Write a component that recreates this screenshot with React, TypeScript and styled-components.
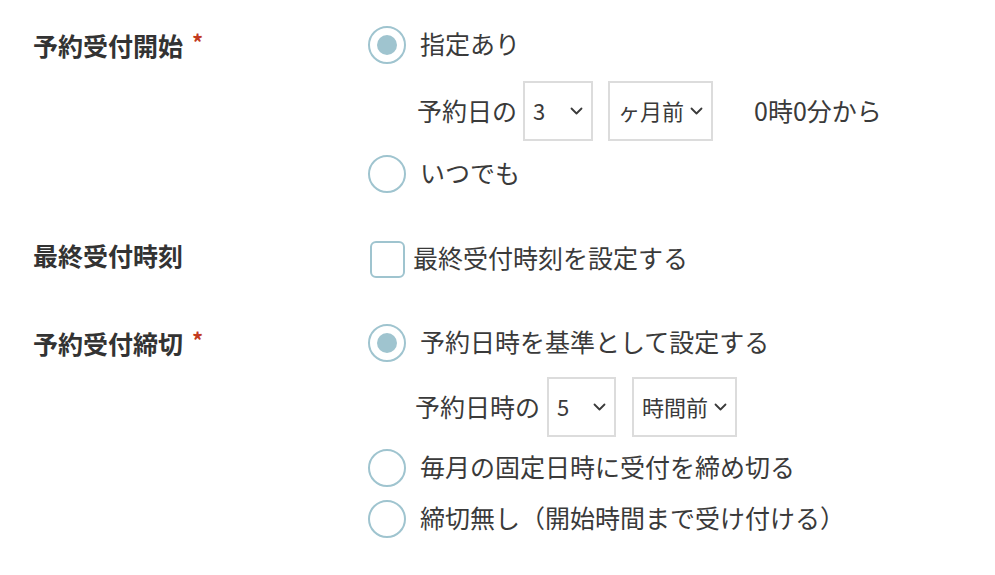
import styled, { createGlobalStyle } from 'styled-components'

const GlobalStyle = createGlobalStyle`
	body {
		margin: 0;
		background: #ffffff;
		font-family: 'Noto Sans CJK JP', 'Noto Sans', sans-serif;
		color: #3a3a3a;
	}
`

const ACCENT = '#9fc4cf'

const Chevron = () => (
	<S.ChevronIcon width='13' height='8' viewBox='0 0 13 8' fill='none'>
		<path d='M1.5 1.5l5 5 5-5' stroke='#3a3a3a' strokeWidth='1.8' strokeLinecap='round' strokeLinejoin='round' />
	</S.ChevronIcon>
)

type RadioProps = { checked?: boolean; label: string; mt?: number }

const Radio = ({ checked, label, mt = 0 }: RadioProps) => (
	<S.OptionRow $mt={mt}>
		<S.RadioCircle>{checked && <S.RadioDot />}</S.RadioCircle>
		<S.OptionText>{label}</S.OptionText>
	</S.OptionRow>
)

type SelectProps = { value: string; width: number }

const Select = ({ value, width }: SelectProps) => (
	<S.SelectBox $width={width}>
		<span>{value}</span>
		<Chevron />
	</S.SelectBox>
)

/** 予約受付設定 */
const App = () => {
	return (
		<>
			<GlobalStyle />
			<S.Form>
				<S.Field>
					<S.Label>
						予約受付開始<S.Required>*</S.Required>
					</S.Label>
					<S.Options>
						<Radio checked label='指定あり' />
						<S.SubRow $mt={17} $indent={49}>
							<S.SubText $gap={6}>予約日の</S.SubText>
							<S.Selects $gap={15}>
								<Select value='3' width={70} />
								<Select value='ヶ月前' width={105} />
							</S.Selects>
							<S.Suffix>0時0分から</S.Suffix>
						</S.SubRow>
						<Radio label='いつでも' mt={14} />
					</S.Options>
				</S.Field>

				<S.Field $mt={47}>
					<S.Label>最終受付時刻</S.Label>
					<S.Options>
						<S.OptionRow $gap={8}>
							<S.CheckBox />
							<S.OptionText>最終受付時刻を設定する</S.OptionText>
						</S.OptionRow>
					</S.Options>
				</S.Field>

				<S.Field $mt={46}>
					<S.Label>
						予約受付締切<S.Required>*</S.Required>
					</S.Label>
					<S.Options>
						<Radio checked label='予約日時を基準として設定する' />
						<S.SubRow $mt={15} $indent={47}>
							<S.SubText $gap={7}>予約日時の</S.SubText>
							<S.Selects $gap={16}>
								<Select value='5' width={69} />
								<Select value='時間前' width={105} />
							</S.Selects>
						</S.SubRow>
						<Radio label='毎月の固定日時に受付を締め切る' mt={12} />
						<Radio label='締切無し（開始時間まで受け付ける）' mt={13} />
					</S.Options>
				</S.Field>
			</S.Form>
		</>
	)
}

export default App

const Form = styled.div`
	padding: 26px 0 0 33px;
`
const Field = styled.div<{ $mt?: number }>`
	display: grid;
	grid-template-columns: 335px 1fr;
	align-items: start;
	margin-top: ${({ $mt = 0 }) => $mt}px;
`
const Label = styled.div`
	font-size: 25px;
	font-weight: 700;
	line-height: 30px;
	color: #333333;
	white-space: nowrap;
`
const Required = styled.span`
	margin-left: 9px;
	font-size: 22px;
	color: #c23a1e;
	vertical-align: 5px;
`
const Options = styled.div`
	display: flex;
	flex-direction: column;
`
const OptionRow = styled.div<{ $mt?: number; $gap?: number }>`
	display: flex;
	align-items: center;
	gap: ${({ $gap = 14 }) => $gap}px;
	height: 38px;
	margin-top: ${({ $mt = 0 }) => $mt}px;
`
const RadioCircle = styled.span`
	display: flex;
	align-items: center;
	justify-content: center;
	box-sizing: border-box;
	width: 38px;
	height: 38px;
	border: 2px solid ${ACCENT};
	border-radius: 50%;
	flex-shrink: 0;
`
const RadioDot = styled.span`
	width: 20px;
	height: 20px;
	border-radius: 50%;
	background: ${ACCENT};
`
const CheckBox = styled.span`
	box-sizing: border-box;
	width: 35px;
	height: 37px;
	margin-left: 2px;
	border: 2px solid ${ACCENT};
	border-radius: 6px;
	flex-shrink: 0;
`
const OptionText = styled.span`
	font-size: 25px;
	line-height: 34px;
	padding-bottom: 4px;
	white-space: nowrap;
`
const SubRow = styled.div<{ $mt: number; $indent: number }>`
	display: flex;
	align-items: center;
	height: 60px;
	margin-top: ${({ $mt }) => $mt}px;
	padding-left: ${({ $indent }) => $indent}px;
`
const SubText = styled.span<{ $gap: number }>`
	font-size: 25px;
	line-height: 30px;
	padding-bottom: 2px;
	white-space: nowrap;
	margin-right: ${({ $gap }) => $gap}px;
`
const Selects = styled.div<{ $gap: number }>`
	display: flex;
	gap: ${({ $gap }) => $gap}px;
`
const SelectBox = styled.div<{ $width: number }>`
	display: flex;
	align-items: center;
	justify-content: space-between;
	gap: 5px;
	box-sizing: border-box;
	width: ${({ $width }) => $width}px;
	height: 60px;
	padding: 0 8px 2px 8px;
	border: 2px solid #dcdcdc;
	font-size: 22px;
	white-space: nowrap;
`
const ChevronIcon = styled.svg`
	flex-shrink: 0;
	margin-top: 2px;
`
const Suffix = styled.span`
	margin-left: 41px;
	font-size: 25px;
	line-height: 30px;
	padding-bottom: 2px;
	white-space: nowrap;
`

const S = {
	Form,
	Field,
	Label,
	Required,
	Options,
	OptionRow,
	RadioCircle,
	RadioDot,
	CheckBox,
	OptionText,
	SubRow,
	SubText,
	Selects,
	SelectBox,
	ChevronIcon,
	Suffix,
}
